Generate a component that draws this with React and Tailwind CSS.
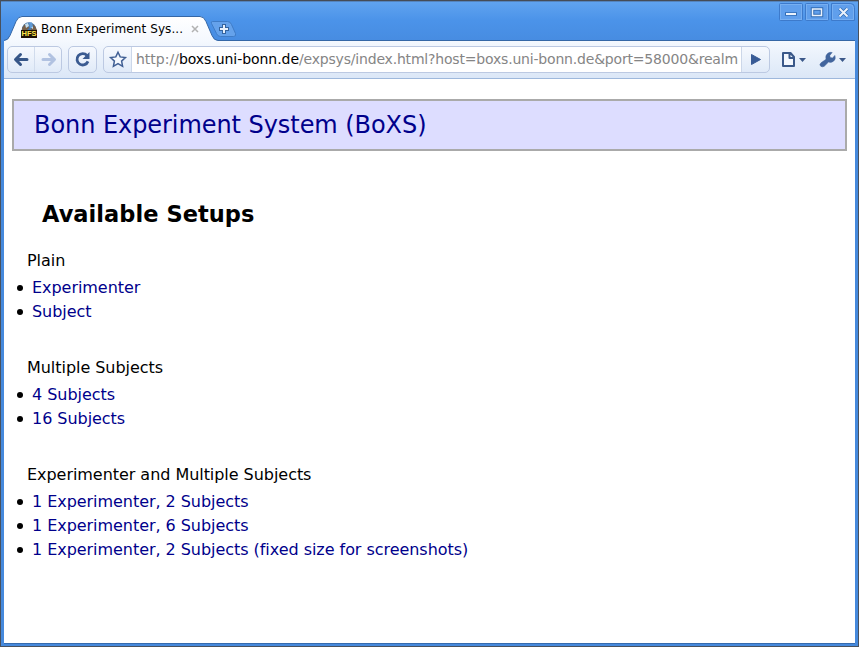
const groups = [
  { title: "Plain", items: ["Experimenter", "Subject"] },
  { title: "Multiple Subjects", items: ["4 Subjects", "16 Subjects"] },
  {
    title: "Experimenter and Multiple Subjects",
    items: [
      "1 Experimenter, 2 Subjects",
      "1 Experimenter, 6 Subjects",
      "1 Experimenter, 2 Subjects (fixed size for screenshots)",
    ],
  },
];

const buttonFrame =
  "flex h-[27px] overflow-hidden rounded-[5px] border border-[#bcc9e2] bg-linear-to-b from-[#f6f9fe] to-[#e0eaf8]";

function Favicon() {
  return (
    <span className="relative block h-[17px] w-[18px] shrink-0">
      <svg width="18" height="17" viewBox="0 0 18 17">
        <circle cx="9" cy="8.500" r="7.200" fill="#4273a8" />
        <path d="M2 7l3-4 3 1 1 3-3 3-4 1zM12 3l3 2 2 4-2 3-4-2z" fill="#77604a" />
        <path d="M5 3l3-1 1 3-3 2zM10 6l3-1v3z" fill="#c4deee" />
        <path d="M9 1.500h3l1 4-3 2z" fill="#5f9ad6" />
        <rect x="1" y="9" width="16" height="8" fill="#1c1004" />
      </svg>
      <span className="absolute left-px top-[9px] w-[16px] text-center font-['Liberation_Sans',sans-serif] text-[7.5px] font-bold leading-[8px] text-[#ffe84a]">
        HFS
      </span>
    </span>
  );
}

function Titlebar() {
  return (
    <header className="relative h-[41px] shrink-0 bg-linear-to-b from-[#62a5f0] via-[#4b93e9] to-[#478ce1]">
      <svg className="absolute inset-0" width="859" height="42" viewBox="0 0 859 42">
        <defs>
          <linearGradient id="tab" x1="0" y1="0" x2="0" y2="1">
            <stop offset="0" stopColor="#ffffff" />
            <stop offset="1" stopColor="#f4f8fe" />
          </linearGradient>
        </defs>
        <path d="M0 .5H859" stroke="#454c56" />
        <path d="M.5 0V42M858.5 0V42" stroke="#48515e" />
        <path d="M1 1.5H858" stroke="#5484bd" />
        <path
          d="M212.5 21.5h15q3 0 4 3l4 9q1 3-2 3h-13q-3 0-4-3l-5-10q-1-2 1-2z"
          fill="#65a2eb"
          stroke="#3f7cc7"
        />
        <path
          d="M4 40.500q4 0 6-5l6-14q2-5 6-5h178q4 0 6 5l6 14q2 5 6 5h637V42H4z"
          fill="url(#tab)"
        />
        <path
          d="M4 40.500q4 0 6-5l6-14q2-5 6-5h178q4 0 6 5l6 14q2 5 6 5h637"
          fill="none"
          stroke="#3567a6"
        />
        <path d="M224 24v10M219 29h10" fill="none" stroke="#34649f" strokeWidth="4" />
        <path d="M224 25v8M220 29h8" stroke="#e7f0fb" strokeWidth="2" />
      </svg>
      <div className="relative flex h-full items-start pl-[20px] pt-[21px]">
        <Favicon />
        <span className="ml-[3px] w-[148px] whitespace-nowrap text-[12px] leading-[16px] tracking-[0.09px] text-black">
          Bonn Experiment Sys...
        </span>
        <svg width="12" height="14" viewBox="0 0 12 14">
          <path d="M3 5l6 6M9 5l-6 6" stroke="#b2b2b2" strokeWidth="1.500" />
        </svg>
      </div>
      <svg className="absolute right-0 top-0" width="82" height="24" viewBox="777 0 82 24">
        <g fill="#609fec" stroke="#3d7acb">
          <rect x="779.5" y="3.500" width="23" height="17" rx="1" />
          <rect x="805.5" y="3.500" width="23" height="17" rx="1" />
          <path d="M831.5 3.500h19q4 0 4 4v13h-23z" />
        </g>
        <g fill="none" stroke="#77aff1">
          <rect x="780.5" y="4.500" width="21" height="15" />
          <rect x="806.5" y="4.500" width="21" height="15" />
          <path d="M832.5 4.500h17q4 0 4 4v11h-21z" />
        </g>
        <g fill="none" stroke="#316cb4" strokeWidth="3.500">
          <path d="M785 14h12M812.500 9h9v6.500h-9zM839.5 8.500l8 8M847.5 8.500l-8 8" />
        </g>
        <g fill="none" stroke="#eaf2fc" strokeWidth="2">
          <path d="M786 14h10M839.5 8.500l8 8M847.5 8.500l-8 8" />
          <rect x="812.5" y="9" width="9" height="6.500" strokeWidth="1.500" />
        </g>
      </svg>
    </header>
  );
}

function Toolbar() {
  return (
    <div className="flex h-[38px] shrink-0 items-start border-b border-[#9eb8dc] bg-linear-to-b from-[#f4f8fe] to-[#dbe7f7] pl-[3px] pt-[5px]">
      <div className={`${buttonFrame} w-[55px]`}>
        <svg width="53" height="25" viewBox="0 0 53 25" fill="none" strokeWidth="3" strokeLinecap="round" strokeLinejoin="round">
          <path d="M12.500 7.500l-5 5 5 5M8 12.500h11" stroke="#365688" />
          <path d="M26.500 0v25" stroke="#d1dced" strokeWidth="1" />
          <path d="M41.500 7.500l5 5-5 5M46 12.500H35" stroke="#b1c2e1" />
        </svg>
      </div>
      <div className={`${buttonFrame} ml-[6px] w-[29px]`}>
        <svg width="27" height="25" viewBox="0 0 27 25">
          <path d="M18 8.500a5.700 5.700 0 1 0 1 5.900" fill="none" stroke="#3b5b91" strokeWidth="2.800" />
          <path d="M20.500 5v7h-7z" fill="#3b5b91" />
        </svg>
      </div>
      <div className={`${buttonFrame} ml-[6px] w-[667px]`}>
        <svg className="w-[27px] shrink-0" height="25" viewBox="0 0 27 25">
          <path
            d="M14 5.200l2.200 4.700 5.200.6-3.800 3.600 1 5.200-4.600-2.600-4.600 2.600 1-5.200-3.800-3.600 5.200-.6z"
            fill="#f4f8fe"
            stroke="#405f94"
            strokeWidth="1.500"
          />
        </svg>
        <div className="w-[611px] shrink-0 whitespace-nowrap border-x border-[#ccd7e9] bg-white pl-[4px] text-[14px] leading-[25px] text-[#858585]">
          http://<span className="tracking-[-0.05px] text-black">boxs.uni-bonn.de</span>
          <span className="tracking-[-0.19px]">
            /expsys/index.html?host=boxs.uni-bonn.de&amp;port=58000&amp;realm
          </span>
        </div>
        <svg width="27" height="25" viewBox="0 0 27 25">
          <path d="M9.500 7.500v10l9-5z" fill="#385b96" stroke="#385b96" strokeLinejoin="round" />
        </svg>
      </div>
      <svg className="ml-[9px]" width="72" height="27" viewBox="779 46 72 27">
        <path d="M783 53h7.500l3.500 4v9h-11zM789.500 53v5h5" fill="#f3f7fd" stroke="#3a5889" strokeWidth="2" strokeLinejoin="round" />
        <path d="M799 58h7l-3.500 4zM839 58h7l-3.500 4z" fill="#3b588a" />
        <path
          d="M820.500 66q-1.500-1.500.5-3.200l5-3.500q-1-3.800 1.800-6 2-1.600 4.400-.8l-2.400 2.900.4 2.100 2.200.4 2.600-2.500q1 4.400-1.800 6-2.100 1.500-4.700.7l-4.200 4.100q-2.200 1.400-3.800-.2z"
          fill="#42659d"
          stroke="#42659d"
          strokeWidth=".5"
        />
      </svg>
    </div>
  );
}

export default function App() {
  return (
    <div className="flex h-[647px] w-[859px] flex-col overflow-hidden bg-[#458ae0] font-['DejaVu_Sans',sans-serif]">
      <Titlebar />
      <div className="flex min-h-0 flex-1 border-x border-b border-[#48515e] bg-[#4689dc] px-[3px] pb-[2px]">
        <div className="flex w-[851px] flex-col bg-white">
          <Toolbar />
          <main className="min-h-0 flex-1 border-b border-[#356baf] px-[8px] pt-[20px] text-[16px] leading-[24px] tracking-[-0.045px] text-black">
            <h1 className="h-[52px] w-[835px] border-2 border-[#aaaaaa] bg-[#ddddff] pl-[20px] text-[24px] leading-[49px] tracking-[-0.06px] text-[#00008b]">
              Bonn Experiment System (BoXS)
            </h1>
            <h2 className="mt-[47px] pl-[30px] text-[22.5px] font-bold leading-[32px] tracking-[0.04px]">
              Available Setups
            </h2>
            <div className="mt-[19px] flex flex-col gap-[32px]">
              {groups.map((group) => (
                <section key={group.title}>
                  <h3 className="mb-[3px] pl-[15px]">{group.title}</h3>
                  <ul>
                    {group.items.map((item) => (
                      <li key={item} className="flex items-center">
                        <span className="mb-px ml-[4.5px] mr-[9.5px] size-[6px] rounded-full bg-black" />
                        <a className="text-[#00008b]">{item}</a>
                      </li>
                    ))}
                  </ul>
                </section>
              ))}
            </div>
          </main>
        </div>
      </div>
    </div>
  );
}
